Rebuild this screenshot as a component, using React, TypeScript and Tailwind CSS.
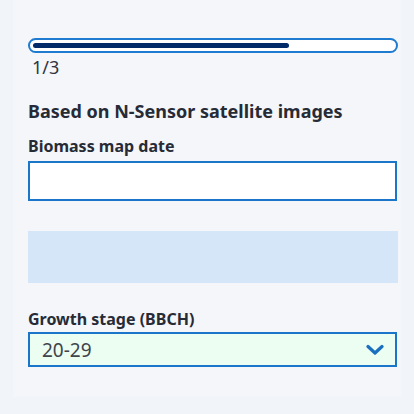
import React from "react";

const steps = 3;
const current = 1;

export default function App() {
  const pct = 71;
  return (
    <div className="w-[414px] h-[414px] bg-[#f1f4f8] pl-[13px] pr-[12px] pb-[17px]" style={{ fontFamily: '"Noto Sans", sans-serif' }}>
      <div className="h-full bg-[#f4f6fa] pl-[15px] pr-[4px] pt-[38px]">
        <div className="h-[15px] rounded-full border-2 border-[#1f7bd0] bg-white px-[3px] flex items-center">
          <div className="h-[5px] rounded-full bg-[#002a68]" style={{ width: `${pct}%` }} />
        </div>
        <div className="mt-[2px] pl-[4px] text-[18px] leading-[24px] text-[#30343d]">
          {current}/{steps}
        </div>
        <h2 className="mt-[20px] text-[18px] leading-[25px] font-bold text-[#272b36]">
          Based on N-Sensor satellite images
        </h2>
        <label className="block mt-[11px] text-[16px] leading-[22px] font-bold text-[#272b36]">
          Biomass map date
        </label>
        <input className="block mt-[4px] w-[369px] h-[40px] border-2 border-[#1b75c9] bg-white outline-none" />
        <div className="mt-[30px] w-[370px] h-[52px] bg-[#d4e6f7]" />
        <label className="block mt-[25px] text-[16px] leading-[22px] font-bold text-[#272b36]">
          Growth stage (BBCH)
        </label>
        <div className="mt-[2px] w-[369px] h-[35px] border-2 border-[#1b75c9] bg-[#ecfdf1] flex items-center justify-between pl-[12px] pr-[11px]">
          <span className="text-[19px] leading-[24px] text-[#40444c]">20-29</span>
          <svg width="18" height="12" viewBox="0 0 18 12" fill="none">
            <path d="M2 2.5 L9 9 L16 2.5" stroke="#1b6fc0" strokeWidth="3.2" strokeLinecap="round" strokeLinejoin="round" />
          </svg>
        </div>
      </div>
    </div>
  );
}
